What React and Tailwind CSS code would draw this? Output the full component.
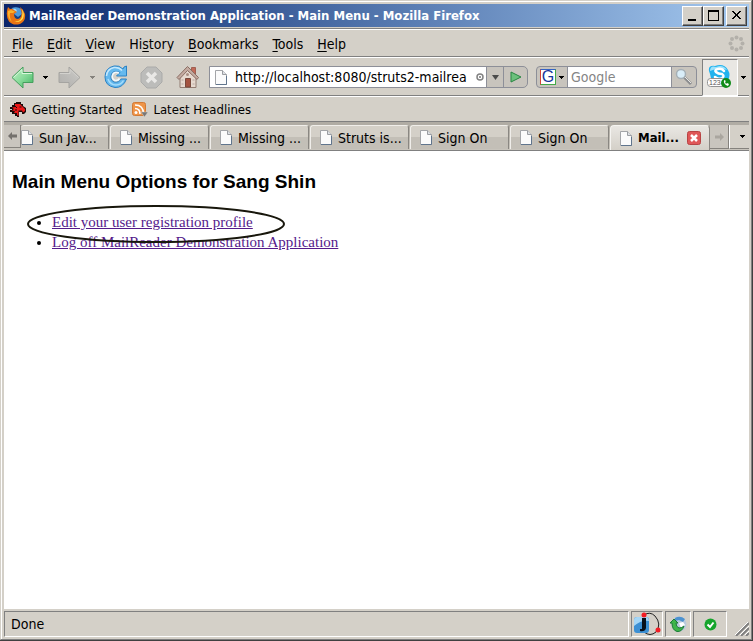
import React from "react";

const UI = "font-['DejaVu_Sans_Condensed','Noto_Sans',sans-serif]";

function FirefoxLogo() {
  return (
    <svg width="20" height="20" viewBox="0 0 20 20" aria-hidden="true">
      <circle cx="10" cy="9" r="8" fill="#173f86" />
      <path d="M6 2Q11 0 15 3L16 8L12 11L8 8Z" fill="#4f9bdb" />
      <path d="M7 3Q10 2 11 5L9 7Z" fill="#a9d8f5" />
      <path d="M2 1L4 3Q6 2 8 4L11 6L8 8Q8 13 12 13Q16 12 15.500 6L14 1Q18 4 19 8Q20 15 14 18Q7 20 3 15.500Q-1 9 2 1Z" fill="#ea7413" />
      <path d="M16 3Q19 8 17 12.500Q14 17 8 15.500Q14 16 16 11Q17 7 16 3Z" fill="#ffe34a" />
      <path d="M2 5Q1 12 6 16Q3 11 4 7L7 7L9 5.500L5 4Z" fill="#fbb32b" />
    </svg>
  );
}

function Page() {
  return (
    <svg className="shrink-0" width="12" height="15" viewBox="0 0 12 15" aria-hidden="true">
      <path d="M.5.5H7.500L11.500 4.500V14.500H.5Z" fill="#fbfbfb" stroke="#a3a5a8" />
      <path d="M7.500.5V4.500H11.500" fill="#dde0e4" stroke="#9a9da1" />
      <path d="M11.500 6V14.500H1" fill="none" stroke="#60758d" />
    </svg>
  );
}

function Arrow({ off }) {
  return (
    <svg className={off ? "-scale-x-100" : ""} width="23" height="23" viewBox="0 0 23 23" aria-hidden="true">
      <defs>
        <linearGradient id={off ? "ga" : "gb"} x2="1" y2="1">
          <stop offset="0" stopColor={off ? "#cccbc7" : "#c3f3c8"} />
          <stop offset=".5" stopColor={off ? "#bdbcb9" : "#8bdc9c"} />
          <stop offset="1" stopColor={off ? "#b0afac" : "#3fb460"} />
        </linearGradient>
      </defs>
      <path d="M1 11.500L12 1V6.500H22V16.500H12V22Z" fill={off ? "url(#ga)" : "url(#gb)"} stroke={off ? "#a5a4a1" : "#459f5d"} strokeLinejoin="round" />
      <path d="M2.500 11.500L11 3.500V7.500H21" fill="none" stroke={off ? "#d3d2ce" : "#d9f8dc"} />
    </svg>
  );
}

function Caret({ className = "text-black" }) {
  return (
    <svg className={className} width="5" height="3" viewBox="0 0 5 3" shapeRendering="crispEdges" aria-hidden="true">
      <path d="M0 0H5V1H4V2H3V3H2V2H1V1H0Z" fill="currentColor" />
    </svg>
  );
}

function Reload() {
  return (
    <svg width="24" height="24" viewBox="0 0 24 24" aria-hidden="true">
      <path d="M20 2L22.500 1V11H12.500L16 7.500Q10 4.500 7.500 9Q5.500 15 10 17Q15 18 17 14H22.500Q19 23 11 22.500Q1 21 1 12Q1 3 10 1Q15 0 19 4Z" fill="#65b9ee" stroke="#2c82c4" strokeLinejoin="round" />
      <path d="M18 5.500Q15 2 10 2.500Q3 4 2.500 11" fill="none" stroke="#c4e8fd" strokeWidth="1.500" />
      <path d="M4 14Q6 20 12 20Q17 20 19.500 15.500" fill="none" stroke="#a7dcfa" strokeWidth="1.500" />
      <path d="M15 8Q10 6 8.500 10Q7.500 14 11 15.500Q14 16 15.500 13.500" fill="none" stroke="#f0f9ff" strokeWidth="1.500" />
    </svg>
  );
}

function Stop() {
  return (
    <svg width="23" height="23" viewBox="0 0 23 23" aria-hidden="true">
      <path d="M7 1H16L22 7V16L16 22H7L1 16V7Z" fill="#bcbcba" stroke="#aaaaa9" />
      <path d="M7 7L16 16M16 7L7 16" stroke="#e9e8e6" strokeWidth="3.500" />
    </svg>
  );
}

function Home() {
  return (
    <svg width="24" height="24" viewBox="0 0 24 24" aria-hidden="true">
      <path d="M15.500 2.500H19.500V9H15.500Z" fill="#c26a58" stroke="#a06052" />
      <path d="M4 11L12 4L20 11V22.500H4Z" fill="#e6d9cf" stroke="#927d73" />
      <path d="M1 12.500L11.500 1.500L22.500 12.500L21 14.500L11.500 5.500L3 14.500Z" fill="#c4aba1" stroke="#8a6d63" />
      <path d="M9.500 13.500H14.500V22H9.500Z" fill="#a4523f" stroke="#78493d" />
      <path d="M5.500 15H7.500M5.500 19H7.500M16.500 15H18.500M16.500 19H18.500" stroke="#b6a59d" />
      <circle cx="11.500" cy="9.500" r="1.500" fill="#a98e84" />
    </svg>
  );
}

function Dino() {
  return (
    <svg width="17" height="16" viewBox="0 0 17 16" aria-hidden="true">
      <path d="M4 1H6V0H11V2H13V4L16 6V10L14 12H12V10L9 10V15H7V14H5V12H2V10H0V8H2V7H0V5H2V3H4Z" fill="#1a0c0c" />
      <path d="M5 2H10L12 4L15 7V9L13 10.500L12 8.500L8.500 8.500V14L7 13V11L4 11L5 9L2 8.500L4 7L2 5.500L5 5Z" fill="#ea1818" />
      <path d="M9.500 5H11.500M5 4L7 6M5 8L7 8" stroke="#1a0c0c" />
    </svg>
  );
}

function Feed() {
  return (
    <svg width="17" height="16" viewBox="0 0 17 16" aria-hidden="true">
      <rect x=".5" y=".5" width="13" height="13" rx="2" fill="#ef9447" stroke="#d27a35" />
      <circle cx="4" cy="10.500" r="1.500" fill="#fff" />
      <path d="M3 6.500Q8 6.500 8 12M3 3Q11.500 3 11.500 12" fill="none" stroke="#fff" strokeWidth="1.500" />
      <path d="M9 10H16L12.500 15Z" fill="#777" stroke="#d4d0c8" strokeWidth=".5" />
    </svg>
  );
}

function Skype() {
  return (
    <svg width="26" height="26" viewBox="0 0 26 26" aria-hidden="true">
      <path d="M2 7Q1 1 8 2Q17-1 21 6Q24 11 21 16Q18 20 13 18Q4 19 3 10Z" fill="#21b3ee" />
      <path d="M3 7Q3 1 9 3Q16 0 20 6Q12 3 3 7Z" fill="#9de2fc" />
      <path d="M17 7Q15 4 11 5Q7 6 9 8Q11 10 15 10Q18 12 15 14Q11 16 8 13" fill="none" stroke="#fff" strokeWidth="2.500" strokeLinecap="round" />
      <rect x=".5" y="14.500" width="18" height="8" rx="3" fill="#fff" stroke="#929292" />
      <text x="2" y="21" fontSize="7" fill="#555" fontFamily="Liberation Sans, sans-serif">123</text>
      <circle cx="19" cy="19" r="5" fill="#108b19" />
      <path d="M17 16Q16 20 21 22L22 20L20 19L19 20L18 18L19 17Z" fill="#fff" />
    </svg>
  );
}

function WindowButton({ label, children }) {
  return (
    <button aria-label={label} className="flex h-5 w-[21px] items-center justify-center border border-t-white border-l-white border-r-[#404040] border-b-[#404040] bg-[#d4d0c8] shadow-[inset_-1px_-1px_#808080]">
      <svg width="12" height="12" viewBox="0 0 12 12" shapeRendering="crispEdges">{children}</svg>
    </button>
  );
}

const menus = [
  ["", "F", "ile"],
  ["", "E", "dit"],
  ["", "V", "iew"],
  ["Hi", "s", "tory"],
  ["", "B", "ookmarks"],
  ["", "T", "ools"],
  ["", "H", "elp"],
];

const tabs = ["Missing ...", "Missing ...", "Struts is...", "Sign On", "Sign On"];

const tabStyle = "flex h-6 items-center rounded-t-[3px] border border-b-0 border-[#f0eeea] border-r-[#8a8782] bg-linear-to-b from-[#d4d0c8] from-50% to-[#c3bfb7] to-50%";

const rule = "border-b border-white shadow-[inset_0_-1px_#808080]";

export default function App() {
  return (
    <div className={`${UI} flex min-h-screen flex-col border-r border-b border-[#404040] bg-[#d4d0c8] text-sm leading-5 text-black`}>
      <div className="flex flex-1 flex-col border-t border-r border-b border-l border-t-[#d4d0c8] border-l-[#d4d0c8] border-r-[#808080] border-b-[#808080]">
        <div className="flex flex-1 flex-col border-t border-l border-white pt-[2px] pr-[2px] pb-[2px] pl-[2px]">
          <header className="flex h-[23px] shrink-0 items-center bg-linear-to-r from-[#0a246a] to-[#a6caf0] pr-[2px] pl-[2px]">
            <FirefoxLogo />
            <h1 className="ml-[3px] min-w-0 flex-1 truncate text-[13px] font-bold text-white">MailReader Demonstration Application - Main Menu - Mozilla Firefox</h1>
            <div className="flex">
              <WindowButton label="Minimize"><path d="M1 9H9V11H1Z" fill="#000" /></WindowButton>
              <WindowButton label="Maximize"><path d="M0 0H11V11H0ZM1 2V10H10V2Z" fill="#000" fillRule="evenodd" /></WindowButton>
            </div>
            <div className="ml-[2px]">
              <WindowButton label="Close"><path d="M1 1H3V2H4V3H5V4H6V3H7V2H8V1H10V2H9V3H8V4H7V6H8V7H9V8H10V9H8V8H7V7H6V6H5V7H4V8H3V9H1V8H2V7H3V6H4V4H3V3H2V2H1Z" fill="#000" /></WindowButton>
            </div>
          </header>

          <div className={`h-[3px] shrink-0 ${rule}`} />
          <nav className="flex h-7 shrink-0 items-center gap-[14px] border-b border-white pr-1 pl-2 shadow-[inset_0_-1px_#808080]">
            {menus.map(([a, k, b]) => (
              <button key={a + k + b}>{a}<span className="underline underline-offset-2">{k}</span>{b}</button>
            ))}
            <svg className="ml-auto" width="17" height="17" viewBox="0 0 17 17" fill="#b3b0aa">
              <circle cx="8.500" cy="2.500" r="2" /><circle cx="13" cy="4" r="2" /><circle cx="14.500" cy="8.500" r="2" /><circle cx="13" cy="13" r="2" />
              <circle cx="8.500" cy="14.500" r="2" /><circle cx="4" cy="13" r="2" /><circle cx="2.500" cy="8.500" r="2" /><circle cx="4" cy="4" r="2" />
            </svg>
          </nav>

          <div className={`flex h-[39px] shrink-0 items-center pl-[7px] ${rule}`}>
            <button aria-label="Back"><Arrow /></button>
            <button aria-label="Back history" className="ml-[9px]"><Caret /></button>
            <button aria-label="Forward" className="ml-[10px]"><Arrow off /></button>
            <button aria-label="Forward history" className="ml-[9px]"><Caret className="text-[#85827c]" /></button>
            <button aria-label="Reload" className="ml-[9px]"><Reload /></button>
            <button aria-label="Stop" className="ml-3"><Stop /></button>
            <button aria-label="Home" className="ml-[13px]"><Home /></button>
            <div className="ml-[9px] flex h-[22px] min-w-0 flex-1 overflow-hidden rounded-r-[5px] border border-[#8d8f98] bg-[#c8c4bd]">
              <div className="flex min-w-0 flex-1 items-center bg-white pl-[5px]">
                <Page />
                <input aria-label="Address" defaultValue="http://localhost:8080/struts2-mailreader/" className="ml-2 h-5 min-w-0 flex-1 bg-transparent outline-none" />
                <svg className="mr-[2px] ml-[9px] shrink-0" width="8" height="8" viewBox="0 0 8 8" aria-hidden="true"><circle cx="4" cy="4" r="3" fill="#fff" stroke="#828282" strokeWidth="1.500" /><path d="M4 3V5M3 4H5" stroke="#777" /></svg>
              </div>
              <button aria-label="Address history" className="flex w-[17px] items-center justify-center border-l border-[#8d8f98] text-[#4b4b4b]"><svg width="7" height="5"><path d="M0 0H7L3.500 5Z" fill="currentColor" /></svg></button>
              <button aria-label="Go" className="flex w-6 items-center justify-center border-l border-[#8d8f98]"><svg width="12" height="12"><path d="M1 1L11 6L1 11Z" fill="#6cc07c" stroke="#298542" strokeLinejoin="round" /></svg></button>
            </div>
            <div className="ml-2 flex h-[22px] w-[161px] shrink-0 overflow-hidden rounded-[4px] border border-[#8d8f98] bg-[#c8c4bd]">
              <button aria-label="Search engine" className="flex w-[31px] items-center gap-[3px] border-r border-[#8d8f98] pl-[3px]">
                <span className="flex h-4 w-4 items-center justify-center border border-t-[#3462c5] border-r-[#43a948] border-b-[#43a948] border-l-[#d44236] bg-white font-['Liberation_Sans',sans-serif] text-base leading-4 text-[#17369b]">G</span><Caret />
              </button>
              <input aria-label="Search" placeholder="Google" className="min-w-0 flex-1 bg-white pl-[3px] outline-none placeholder:text-[#858585]" />
              <button aria-label="Search" className="flex w-[25px] items-center justify-center border-l border-[#8d8f98]">
                <svg width="18" height="18"><path d="M9 9L16 16" stroke="#8c8d8f" strokeWidth="3" /><path d="M10 9L16 15" stroke="#e6e6e4" /><circle cx="6" cy="6" r="4.500" fill="#d9edf8" stroke="#a5afb5" strokeWidth="1.500" /></svg>
              </button>
            </div>
            <button aria-label="Skype" className="ml-[5px] flex h-[37px] w-9 items-center justify-center border border-[#808080] border-r-white border-b-white bg-[#e9e7e3]"><Skype /></button>
            <button aria-label="Skype options" className="mr-[3px] ml-[3px]"><Caret /></button>
          </div>

          <div className="flex h-[25px] shrink-0 items-center border-b border-[#808080] pt-[2px] pl-[6px] text-[13px]">
            <a href="#getting-started" className="flex items-center gap-[5px]"><Dino />Getting Started</a>
            <a href="#latest-headlines" className="ml-[10px] flex items-center gap-1"><Feed />Latest Headlines</a>
          </div>

          <div className="flex h-[29px] shrink-0 items-start border-b border-[#808080] bg-linear-to-b from-[#b0aca4] from-10% to-[#c8c4bc] to-90% pt-[3px]">
            <button aria-label="Scroll tabs left" className="flex h-[23px] w-[17px] shrink-0 items-center justify-center border-r border-b border-[#85827d] bg-[#c9c5be]">
              <svg width="9" height="8"><path d="M0 4L4 0V2.500H9V5.500H4V8Z" fill="#74716d" /></svg>
            </button>
            <div role="tablist" className="flex min-w-0 flex-1 gap-px">
              <button role="tab" className={`${tabStyle} w-[88px] shrink-0 gap-[6px] border-l-0`}><Page />Sun Jav...</button>
              {tabs.map((t, i) => (
                <button role="tab" key={i} className={`${tabStyle} min-w-0 flex-1 gap-[6px] pl-[9px] whitespace-nowrap`}><Page />{t}</button>
              ))}
              <div className="flex h-[25px] w-[100px] shrink-0 items-center rounded-t-[4px] border border-b-0 border-[#f5f4f1] border-r-[#8a8782] bg-linear-to-b from-[#e9e7e3] to-[#d4d0c8] pl-[9px]">
                <button role="tab" aria-selected="true" className="flex items-center gap-[6px] text-[13px] font-bold"><Page />Mail...</button>
                <button aria-label="Close tab" className="mr-2 ml-auto">
                  <svg width="14" height="14"><rect x=".5" y=".5" width="13" height="13" rx="2" fill="#df5757" stroke="#b84444" /><path d="M4 4L10 10M10 4L4 10" stroke="#fff" strokeWidth="2.500" /></svg>
                </button>
              </div>
            </div>
            <button aria-label="Scroll tabs right" className="flex h-6 w-[19px] shrink-0 items-center justify-center border-r border-b border-[#85827d] bg-[#c9c5be]">
              <svg width="9" height="8"><path d="M9 4L5 0V2.500H0V5.500H5V8Z" fill="#aaa69f" /></svg>
            </button>
            <button aria-label="List tabs" className="flex h-6 w-5 shrink-0 items-center justify-center border-b border-l border-[#85827d] border-l-white bg-[#d4d0c8] pl-[6px]"><Caret /></button>
          </div>

          <main className="relative flex-1 bg-white px-2 pt-[18px] font-['Liberation_Serif',serif]">
            <h2 className="font-['Liberation_Sans',sans-serif] text-[19px] leading-[26px] font-bold">Main Menu Options for Sang Shin</h2>
            <ul className="mt-[17px] list-disc pl-10 text-[15px] leading-5 text-[#551a8b] marker:text-black">
              <li><a href="#edit" className="underline">Edit your user registration profile</a></li>
              <li><a href="#logoff" className="underline">Log off MailReader Demonstration Application</a></li>
            </ul>
            <svg className="pointer-events-none absolute top-[54px] left-[22px]" width="260" height="39" aria-hidden="true">
              <ellipse cx="130" cy="19" rx="128" ry="18" fill="none" stroke="#18170c" strokeWidth="2" />
            </svg>
          </main>

          <footer className="flex h-7 shrink-0 gap-[2px] pt-[2px]">
            <div className="flex flex-1 items-center border border-[#808080] border-r-white border-b-white pl-[6px]">Done</div>
            <div className="flex w-8 items-center justify-center border border-[#808080] border-r-white border-b-white">
              <svg width="28" height="24" viewBox="0 0 28 24"><path d="M11 3Q17-1 22 4Q29 12 23 20Q17 25 11 20" fill="none" stroke="#222" /><rect x="1" y="5" width="15" height="16" rx="3" fill="#3c8fd3" /><path d="M1 14V8Q1 5 4 5H13Q16 5 16 9Q8 8 1 14Z" fill="#a5d6f6" /><path d="M9 6H13V16Q12 20 7 19V17H9Z" fill="#07101b" /><circle cx="11" cy="3" r="2.500" fill="#f21c24" /><circle cx="25" cy="18" r="2.500" fill="#f21c24" /></svg>
            </div>
            <div className="flex w-[26px] items-center justify-center border border-[#808080] border-r-white border-b-white">
              <svg width="17" height="17" viewBox="0 0 17 17"><circle cx="9" cy="8" r="7.500" fill="#b9c9dc" /><path d="M5 2Q10-1 15 3L13 6L9 4L5 5Z" fill="#4d92cf" /><path d="M9 7L13 6L15 9L11 12Z" fill="#fff" /><path d="M0 7L4 3L8 7H6Q6 11 9 12Q12 12 14 10Q12 16 7 15.500Q2 14 2 7Z" fill="#3fb54a" stroke="#1b7c37" /></svg>
            </div>
            <div className="flex w-[34px] items-center justify-center border border-[#808080] border-r-white border-b-white">
              <svg width="13" height="13"><circle cx="6.500" cy="6.500" r="6" fill="#16a52c" /><path d="M3.500 6.500L6 9L9.500 4.500" fill="none" stroke="#fff" strokeWidth="2" /></svg>
            </div>
            <div className="flex w-5 items-end justify-end pb-px">
              <svg width="14" height="14"><path d="M1 14L14 1M6 14L14 6M11 14L14 11" stroke="#808080" strokeWidth="2" /><path d="M0 13L13 0M5 13L14 4M10 13L14 9" stroke="#fff" /></svg>
            </div>
          </footer>
        </div>
      </div>
    </div>
  );
}
